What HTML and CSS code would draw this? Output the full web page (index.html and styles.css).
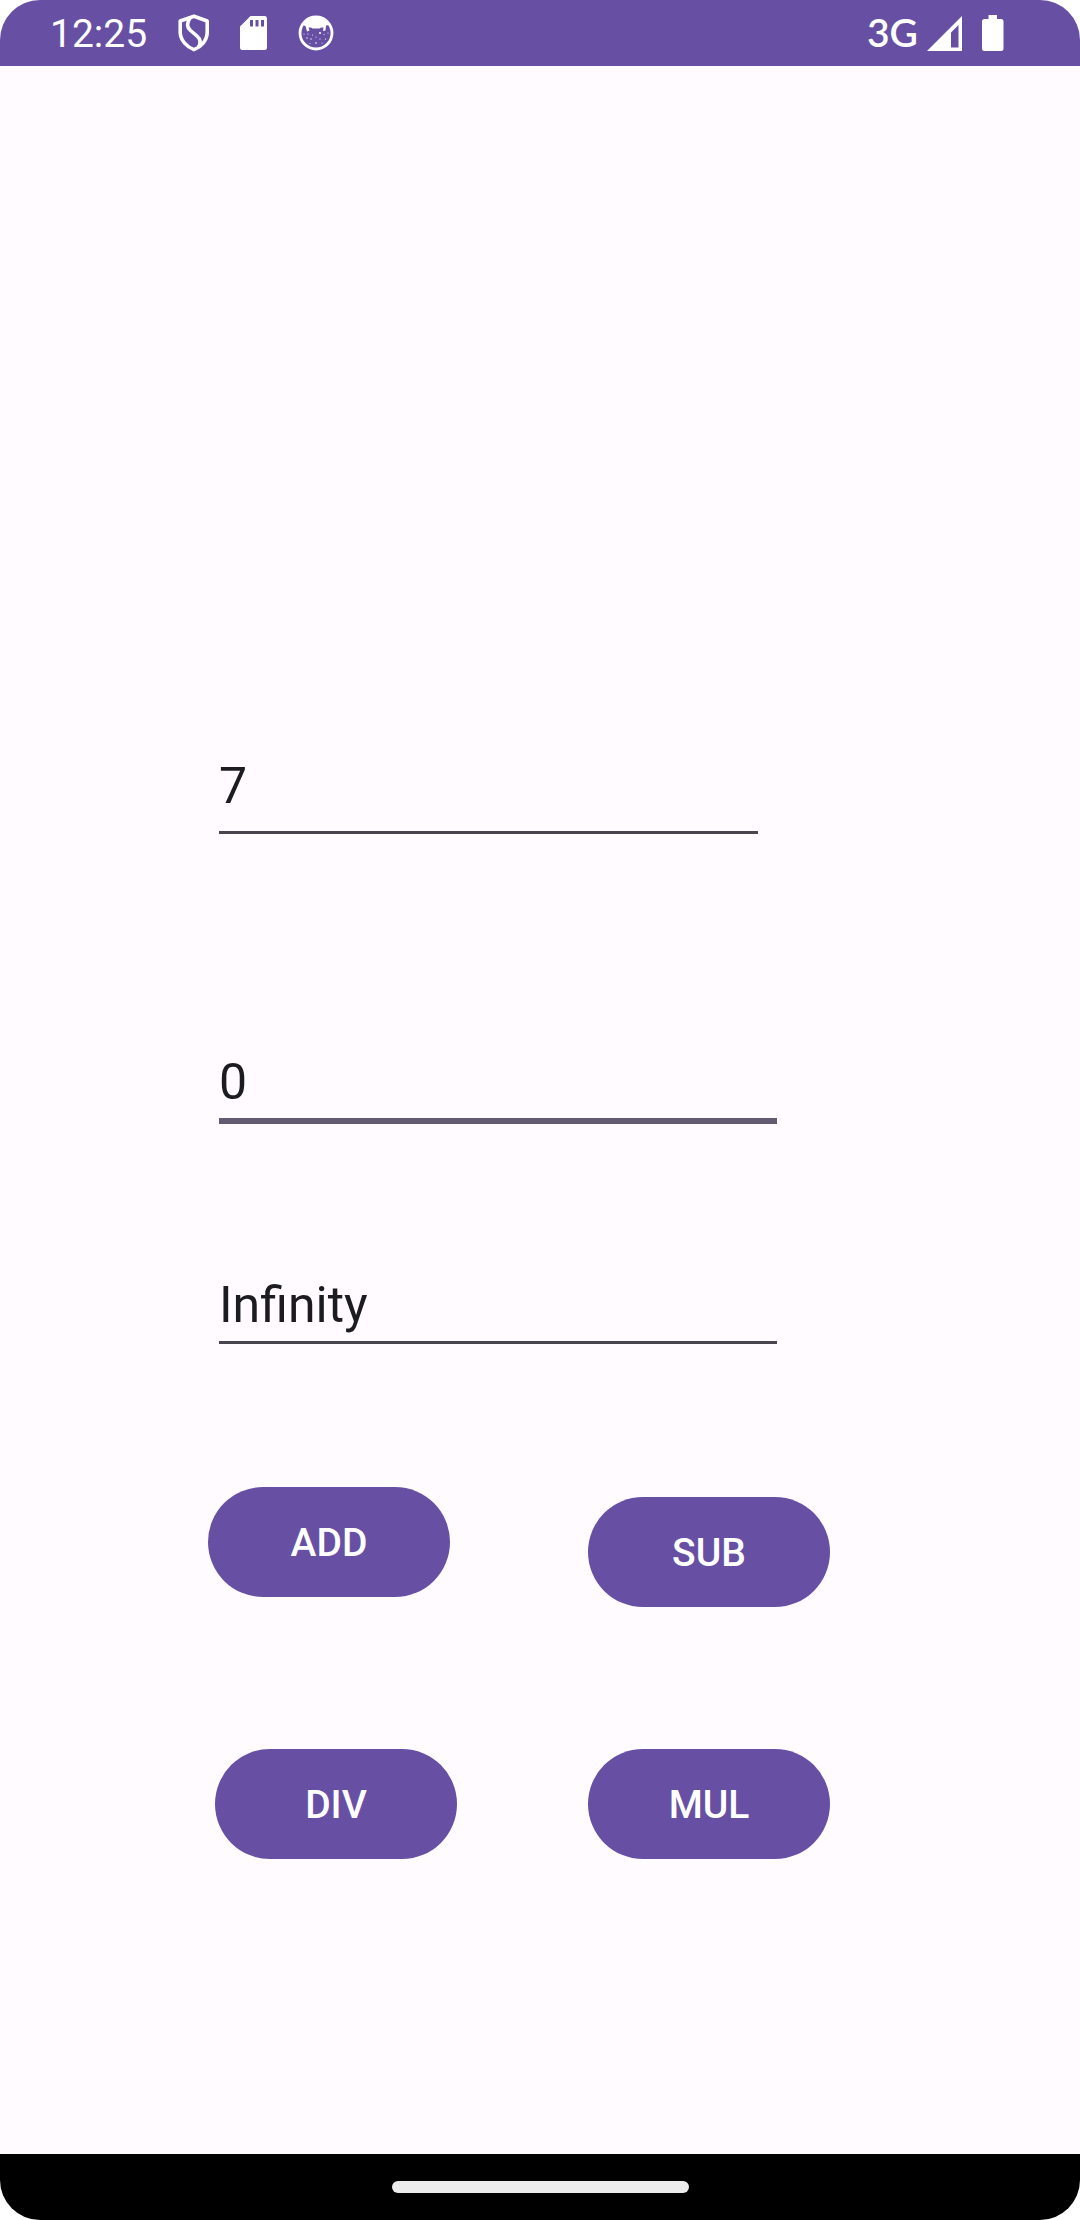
FILE: index.html
```html
<!DOCTYPE html>
<html lang="en">
<head>
<meta charset="utf-8">
<meta name="viewport" content="width=device-width, initial-scale=1">
<title>Calculator</title>
<link rel="stylesheet" href="styles.css">
</head>
<body>
<div class="screen">
  <header class="status-bar">
    <span class="clock">12:25</span>
    <div class="notifications">
      <svg class="icon-shield" width="32" height="38" viewBox="0 0 32 38" fill="none" stroke="#fff" stroke-width="3.6" stroke-linejoin="round" aria-hidden="true">
        <path d="M16 2.2 29.200 7v11.500C29 26.500 23 33 16 35.600 9 33 2.500 26.500 2.200 18.500V7Z"/>
        <path d="M12 4.200C8.500 9 9 13.200 12.500 16.500l6.500 5.500c4 3.500 4 7 1.500 11"/>
      </svg>
      <svg class="icon-card" width="28" height="34" viewBox="0 0 28 34" aria-hidden="true">
        <path fill="#fff" fill-rule="evenodd" d="M10.500 0H24.500Q27 0 27 2.500V31.500Q27 34 24.500 34H2.500Q0 34 0 31.500V10.500ZM10 4v6.500h3V4ZM15.500 4v6.500h3V4ZM21 4v6.500h3V4Z"/>
      </svg>
      <svg class="icon-cat" width="36" height="36" viewBox="0 0 36 36" aria-hidden="true">
        <circle cx="18" cy="18" r="16" fill="none" stroke="#fff" stroke-width="2.800"/>
        <path fill="#fff" d="M4 10C8 4 12 1.500 18 1.500S28 4 32 10L28 10.500 27.500 15.500 25 16 25.500 12.500H23L21.500 13.500H14.500L13 12.500H10.500L11.500 15.500 9 16.500 7.500 11Z"/>
        <g fill="#fff">
          <circle cx="6" cy="19" r=".5"/><circle cx="10" cy="19" r=".6"/><circle cx="9" cy="23" r=".7"/>
          <circle cx="13" cy="24" r=".7"/><circle cx="14.500" cy="20" r=".5"/><circle cx="18" cy="22" r=".5"/>
          <circle cx="22" cy="18" r="1"/><circle cx="22" cy="24" r=".6"/><circle cx="26" cy="19.500" r=".5"/>
          <circle cx="27.500" cy="24" r=".6"/><circle cx="30" cy="18" r=".5"/><circle cx="18" cy="28" r=".8"/>
          <circle cx="12" cy="28.500" r=".5"/><circle cx="24" cy="28" r=".5"/>
        </g>
      </svg>
    </div>
    <div class="system">
      <span class="network">3G</span>
      <svg class="icon-signal" width="36" height="35" viewBox="0 0 36 35" aria-hidden="true">
        <path fill="#fff" fill-rule="evenodd" d="M35 0V35H0ZM31.500 9 24 16.500V31.500H31.500Z"/>
      </svg>
      <svg class="icon-battery" width="22" height="36" viewBox="0 0 22 36" aria-hidden="true">
        <path fill="#fff" d="M6.500 0h8.500v4h4q2.500 0 2.500 2.500v27q0 2.500-2.500 2.500H2.500Q0 36 0 33.500v-27Q0 4 2.500 4h4Z"/>
      </svg>
    </div>
  </header>

  <main class="content">
    <form class="calculator">
      <input class="field field-first" type="text" inputmode="decimal" value="7" aria-label="First number">
      <input class="field field-second" type="text" inputmode="decimal" value="0" aria-label="Second number">
      <input class="field field-result" type="text" value="Infinity" aria-label="Result">
      <div class="row row-top">
        <button class="button" type="button">ADD</button>
        <button class="button button-lowered" type="button">SUB</button>
      </div>
      <div class="row row-bottom">
        <button class="button" type="button">DIV</button>
        <button class="button" type="button">MUL</button>
      </div>
    </form>
  </main>

  <footer class="nav-bar"><div class="nav-handle"></div></footer>
</div>
</body>
</html>
```
FILE: styles.css
```css
* {
  box-sizing: border-box;
}

body {
  margin: 0;
  background: #fff;
  color: #1c1b1f;
  font-family: Roboto, "Liberation Sans", sans-serif;
}

.screen {
  display: flex;
  flex-direction: column;
  min-height: 100vh;
  overflow: hidden;
  border-radius: 40px;
  background: #fffbfe;
}

/* Status bar */
.status-bar {
  display: flex;
  align-items: center;
  height: 66px;
  padding: 0 76px 0 50px;
  background: #6750a4;
  color: #fff;
}

.clock {
  padding-top: 2px;
  font-size: 39px;
  line-height: 46px;
}

.notifications {
  display: flex;
  align-items: center;
  gap: 30px;
  margin-left: 31px;
}

.system {
  display: flex;
  align-items: center;
  margin-left: auto;
}

.network {
  padding-bottom: 2px;
  font-family: Lato, sans-serif;
  font-size: 39px;
  font-weight: 600;
  line-height: 46px;
}

.icon-signal {
  margin-left: 9px;
}

.icon-battery {
  margin-left: 19px;
}

/* Calculator */
.content {
  flex: 1;
}

.calculator {
  display: flex;
  flex-direction: column;
  padding: 690px 250px 0 208px;
}

.field {
  height: 78px;
  min-width: 0;
  margin: 0 53px 0 11px;
  padding: 0;
  border: 0;
  border-bottom: 3px solid #49454f;
  border-radius: 0;
  outline: 0;
  background: transparent;
  color: inherit;
  font-family: inherit;
  font-size: 50px;
  line-height: 60px;
}

.field-first {
  margin-right: 72px;
  padding-bottom: 15px;
}

.field-second {
  height: 72px;
  margin-top: 218px;
  padding-bottom: 6px;
  border-bottom: 6px solid #625b71;
}

.field-result {
  height: 69px;
  margin-top: 151px;
  padding-bottom: 6px;
}

.row {
  display: flex;
  align-items: flex-start;
  justify-content: space-between;
  margin-top: 142px;
}

.row-top {
  margin-top: 143px;
}

.row-bottom {
  padding-left: 7px;
}

.button {
  width: 242px;
  height: 110px;
  padding: 2px 0 0;
  border: 0;
  border-radius: 55px;
  background: #6750a4;
  color: #fff;
  font-family: inherit;
  font-size: 39px;
  font-weight: 500;
  line-height: 46px;
}

.button-lowered {
  margin-top: 10px;
}

/* Gesture navigation */
.nav-bar {
  display: flex;
  align-items: center;
  justify-content: center;
  height: 66px;
  background: #000;
}

.nav-handle {
  width: 297px;
  height: 12px;
  border-radius: 6px;
  background: #ececec;
}
```
